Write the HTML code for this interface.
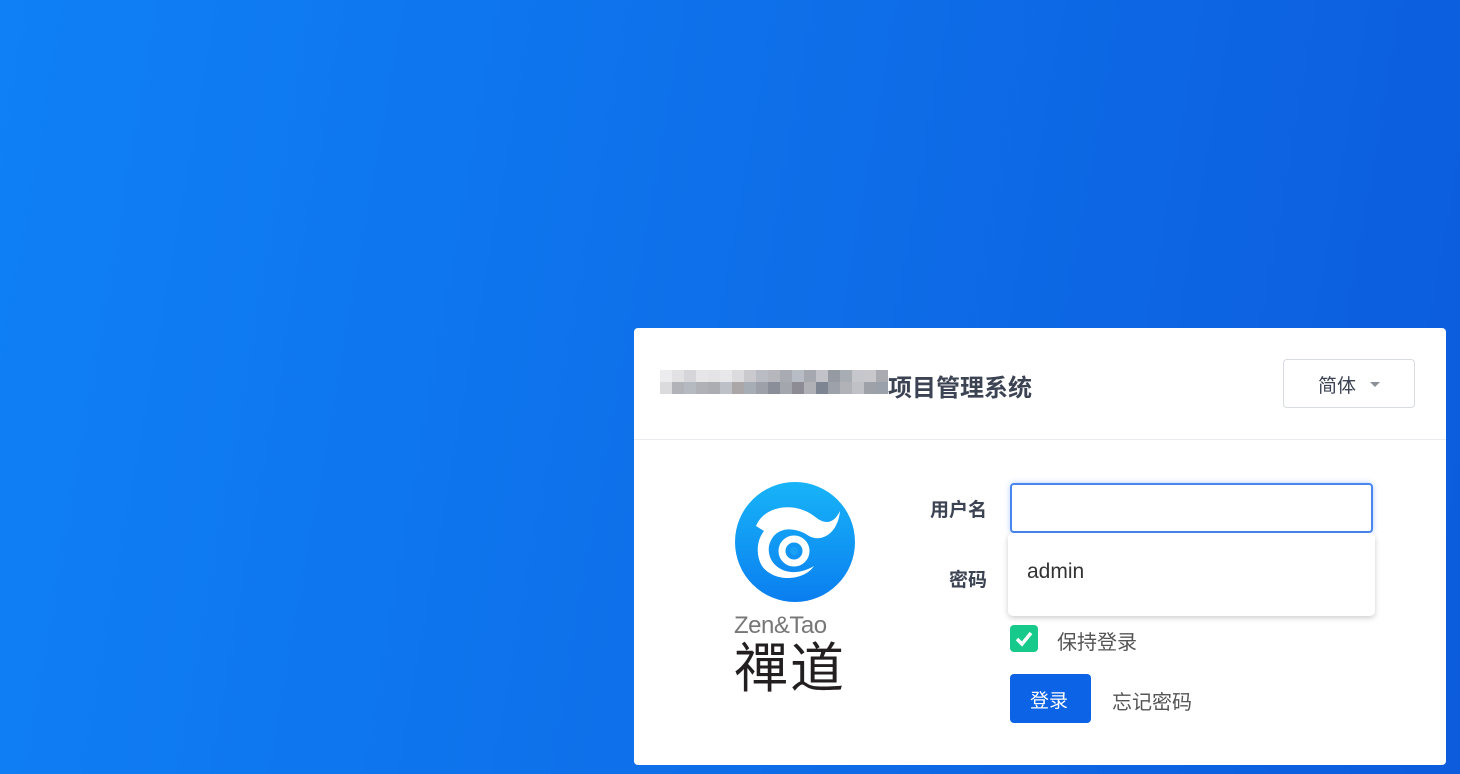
<!DOCTYPE html>
<html><head><meta charset="utf-8"><style>
*{margin:0;padding:0;box-sizing:border-box}
body{width:1460px;height:774px;overflow:hidden;background:linear-gradient(100deg,#0f80f6 0%,#0e6fe9 50%,#0c5cdd 100%);font-family:"Liberation Sans","Noto Sans CJK SC",sans-serif;position:relative}
.card{position:absolute;left:634px;top:328px;width:812px;height:437px;background:#fff;border-radius:4px}
.hd{height:112px;border-bottom:1px solid #eaecef;position:relative}
.title{position:absolute;left:254px;top:40px;font-size:24px;font-weight:bold;color:#3c4353}
.blur{position:absolute;top:42px;height:24px;display:flex}
.blur span{width:12px;height:12px}
.lang{position:absolute;left:649px;top:31px;width:132px;height:49px;border:1px solid #d8dbe0;border-radius:4px;font-size:19px;color:#3c4353;padding:11px 0 0 34px}
.lang:after{content:"";position:absolute;left:86px;top:22px;border:5px solid transparent;border-top-color:#8a8f98}
.lbl{position:absolute;font-size:19px;font-weight:bold;color:#3c4353;text-align:right;width:100px}
.inp{position:absolute;left:376px;top:155px;width:363px;height:50px;border:2px solid #4a86ee;border-radius:4px;box-shadow:0 0 6px rgba(50,120,240,.35)}
.dd{position:absolute;left:374px;top:205px;width:367px;height:83px;background:#fff;border-radius:5px;box-shadow:0 2px 6px rgba(0,0,0,.2);font-size:21px;color:#333;padding:27px 0 0 19px}
.cb{position:absolute;left:376px;top:297px;width:28px;height:27px;background:#17c98a;border-radius:4px}
.btn{position:absolute;left:376px;top:346px;width:81px;height:49px;background:#0c63e6;border-radius:4px;color:#fff;font-size:19px;padding:12px 0 0 20px}
</style></head><body>
<div class="card">
 <div class="hd">
  <div class="blur" style="left:26px;top:42px">
   <div style="display:grid;grid-template-columns:repeat(19,12px);grid-template-rows:12px 12px">
    <span style="background:#ececee"></span><span style="background:#e2e2e5"></span><span style="background:#d6d6da"></span><span style="background:#e6e6e8"></span><span style="background:#e4e4e6"></span><span style="background:#e8e8ea"></span><span style="background:#dcdcdf"></span><span style="background:#c9c9ce"></span><span style="background:#b9bcc3"></span><span style="background:#b5b7bd"></span><span style="background:#a9abb2"></span><span style="background:#b8bcc4"></span><span style="background:#a6a8b0"></span><span style="background:#c2c3c8"></span><span style="background:#959aa3"></span><span style="background:#a8acb3"></span><span style="background:#c6c7cc"></span><span style="background:#c8c8cc"></span><span style="background:#a9abb1"></span>
    <span style="background:#dbdbde"></span><span style="background:#b2b3b8"></span><span style="background:#b5bac1"></span><span style="background:#b0b1b7"></span><span style="background:#acadb3"></span><span style="background:#bdc0c7"></span><span style="background:#aba6a8"></span><span style="background:#a7adb5"></span><span style="background:#9da0a9"></span><span style="background:#8a8e98"></span><span style="background:#a3a6ad"></span><span style="background:#8d8b93"></span><span style="background:#b0b1b6"></span><span style="background:#7e8592"></span><span style="background:#9da1a9"></span><span style="background:#b0b2b8"></span><span style="background:#bfc1c6"></span><span style="background:#9fa1a8"></span><span style="background:#9ba1aa"></span>
   </div>
  </div>
  <div class="title">项目管理系统</div>
  <div class="lang">简体</div>
 </div>
 <svg style="position:absolute;left:100px;top:153px" width="122" height="122" viewBox="0 0 122 122">
  <defs><linearGradient id="g" x1="0" y1="0" x2="0" y2="1"><stop offset="0" stop-color="#18b4f8"/><stop offset="1" stop-color="#0a7ef0"/></linearGradient></defs>
  <circle cx="61" cy="61" r="60" fill="url(#g)"/>
  <path d="M22 45 C30 25 60 20 80 35 C92 45 100 42 106 30 C104 52 88 62 75 55 C60 45 40 45 35 65 C32 85 55 100 80 85 C70 100 40 102 28 85 C22 75 22 60 30 50 Z" fill="#fff"/>
  <circle cx="60" cy="70" r="12" fill="none" stroke="#fff" stroke-width="7"/>
  <circle cx="60" cy="70" r="4" fill="#19a0f5"/>
 </svg>
 <div style="position:absolute;left:100px;top:284px;font-size:24px;color:#777;letter-spacing:-0.5px">Zen&amp;Tao</div>
 <div style="position:absolute;left:100px;top:314px;font-size:54px;color:#231f20;line-height:1;letter-spacing:2px">禪道</div>
 <div class="lbl" style="left:253px;top:167px">用户名</div>
 <div class="lbl" style="left:253px;top:237px">密码</div>
 <div class="inp"></div>
 <div class="dd">admin</div>
 <div class="cb"><svg width="28" height="27"><path d="M7 14 L12 19 L21 8" stroke="#fff" stroke-width="3.5" fill="none"/></svg></div>
 <div style="position:absolute;left:423px;top:298px;font-size:20px;color:#555">保持登录</div>
 <div class="btn">登录</div>
 <div style="position:absolute;left:478px;top:358px;font-size:20px;color:#555">忘记密码</div>
</div>
</body></html>
